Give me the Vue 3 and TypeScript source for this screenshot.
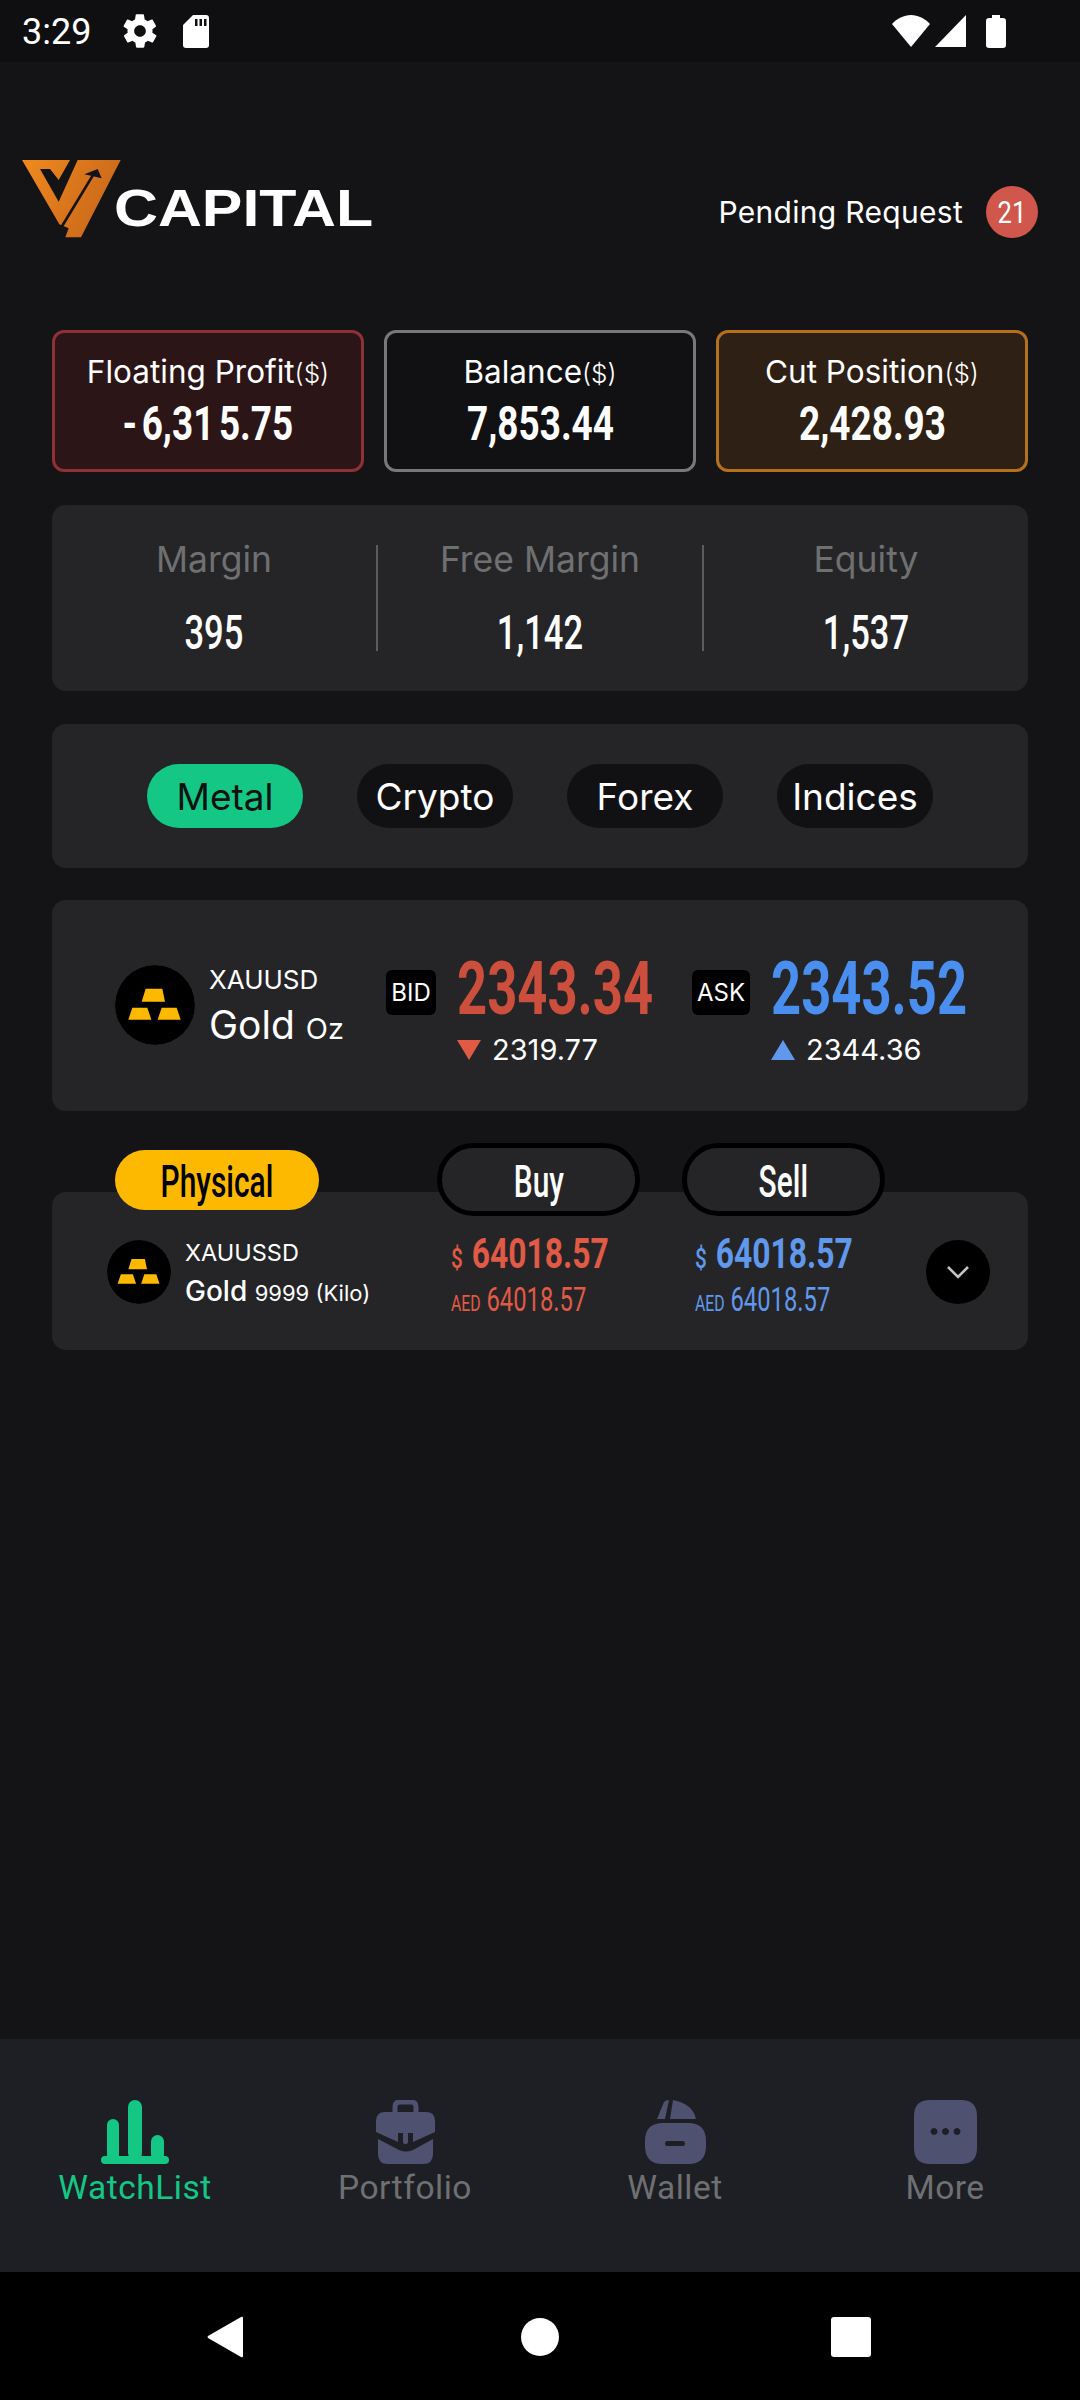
<script setup lang="ts">
const cards = [
  { label: 'Floating Profit', value: '- 6,31 5.75', tone: 'red' },
  { label: 'Balance', value: '7,853.44', tone: 'gray' },
  { label: 'Cut Position', value: '2,428.93', tone: 'orange' },
]
const stats = [
  { label: 'Margin', value: '395' },
  { label: 'Free Margin', value: '1,142' },
  { label: 'Equity', value: '1,537' },
]
const tabs = ['Metal', 'Crypto', 'Forex', 'Indices']
</script>

<template>
  <div class="page">
    <div class="status">
      <span class="time">3:29</span>
      <svg class="gear" viewBox="0 0 24 24"><path fill="#fff" d="M19.4 13c.1-.3.1-.7.1-1s0-.7-.1-1l2.1-1.6c.2-.2.2-.4.1-.6l-2-3.5c-.1-.2-.4-.3-.6-.2l-2.5 1c-.5-.4-1.100-.7-1.700-1l-.4-2.600c0-.3-.2-.5-.5-.5h-4c-.3 0-.5.2-.5.500l-.4 2.600c-.6.3-1.200.6-1.700 1l-2.500-1c-.2-.1-.5 0-.6.200l-2 3.500c-.1.200-.1.400.1.600L4.600 11c-.1.300-.1.700-.1 1s0 .7.1 1l-2.100 1.600c-.2.200-.2.400-.1.600l2 3.500c.1.200.4.300.6.200l2.500-1c.5.400 1.100.7 1.700 1l.4 2.600c0 .3.2.5.5.5h4c.3 0 .5-.2.5-.5l.4-2.600c.6-.3 1.200-.6 1.700-1l2.500 1c.2.100.5 0 .6-.2l2-3.500c.1-.2.1-.4-.1-.6L19.400 13zM12 15.500c-1.900 0-3.500-1.600-3.500-3.500s1.600-3.500 3.500-3.500 3.500 1.600 3.500 3.500-1.600 3.500-3.500 3.500z"/></svg>
      <svg class="sd" viewBox="0 0 26 33"><path fill="#fff" fill-rule="evenodd" d="M10 0h13a3 3 0 0 1 3 3v27a3 3 0 0 1-3 3H3a3 3 0 0 1-3-3V10zM12 4v7h2.500V4zM16.500 4v7H19V4zM21 4v7h2.500V4z"/></svg>
      <span class="grow"></span>
      <svg class="wifi" viewBox="0 0 38 32"><path fill="#fff" d="M19 32 0 9C5 3.500 12 0 19 0s14 3.500 19 9z"/></svg>
      <svg class="signal" viewBox="0 0 31 32"><path fill="#fff" d="M31 0v32H0z"/></svg>
      <svg class="battery" viewBox="0 0 20 33"><path fill="#fff" d="M6 0h8v3h3a3 3 0 0 1 3 3v24a3 3 0 0 1-3 3H3a3 3 0 0 1-3-3V6a3 3 0 0 1 3-3h3z"/></svg>
    </div>

    <header class="header">
      <div class="logo">
        <svg class="logo-mark" viewBox="38 65 296 235">
          <defs>
            <linearGradient id="lg" x1="0" y1="0" x2="1" y2="0.4">
              <stop offset="0" stop-color="#f08a1e" />
              <stop offset="1" stop-color="#c9681a" />
            </linearGradient>
          </defs>
          <polygon fill="url(#lg)" points="38,65 334,65 215,297 168,297 178,270 150,258" />
          <polygon fill="#141416" points="92,92 122,92 148,125 182,65 205,65 148,190" />
          <path fill="none" stroke="#141416" stroke-width="8" d="M158 264 250 112" />
          <polygon fill="#141416" points="225,108 265,92 277,120" />
        </svg>
        <span class="logo-text">CAPITAL</span>
      </div>
      <div class="pending">
        <span>Pending Request</span>
        <span class="badge"><span class="cond">21</span></span>
      </div>
    </header>

    <main class="main">
      <section class="cards">
        <div v-for="c in cards" :key="c.label" class="card" :class="c.tone">
          <div class="card-label">{{ c.label }}<small>($)</small></div>
          <div class="card-value">{{ c.value }}</div>
        </div>
      </section>

      <section class="panel stats">
        <div v-for="s in stats" :key="s.label" class="stat">
          <div class="stat-label">{{ s.label }}</div>
          <div class="stat-value">{{ s.value }}</div>
        </div>
      </section>

      <section class="panel tabs">
        <span v-for="(t, i) in tabs" :key="t" class="tab" :class="{ active: i === 0 }">{{ t }}</span>
      </section>

      <section class="panel gold">
        <svg class="coin" viewBox="43 47 240 240">
          <circle cx="163" cy="167" r="120" fill="#000" />
          <polygon fill="#fdb900" points="135,118 185,118 193,157 123,157" />
          <polygon fill="#fdb900" points="95,175 140,175 152,211 83,211" />
          <polygon fill="#fdb900" points="183,175 228,175 240,211 171,211" />
        </svg>
        <div class="gold-name">
          <div class="sym">XAUUSD</div>
          <div class="gname">Gold <small>Oz</small></div>
        </div>
        <span class="tag bid">BID</span>
        <div class="quote q-bid">
          <div class="price red-text">2343.34</div>
          <div class="sub"><i class="tri down"></i>2319.77</div>
        </div>
        <span class="tag ask">ASK</span>
        <div class="quote">
          <div class="price blue-text">2343.52</div>
          <div class="sub"><i class="tri up"></i>2344.36</div>
        </div>
      </section>

      <section class="pills">
        <span class="pill physical"><span>Physical</span></span>
        <span class="pill action first"><span>Buy</span></span>
        <span class="pill action"><span>Sell</span></span>
      </section>
      <section class="panel phys">
        <svg class="coin small" viewBox="43 47 240 240">
          <circle cx="163" cy="167" r="120" fill="#000" />
          <polygon fill="#fdb900" points="135,118 185,118 193,157 123,157" />
          <polygon fill="#fdb900" points="95,175 140,175 152,211 83,211" />
          <polygon fill="#fdb900" points="183,175 228,175 240,211 171,211" />
        </svg>
        <div class="phys-name">
          <div class="psym">XAUUSSD</div>
          <div class="pname">Gold <small>9999 (Kilo)</small></div>
        </div>
        <div class="pcol first red-soft">
          <div class="pusd"><small>$</small>64018.57</div>
          <div class="paed"><small>AED</small>64018.57</div>
        </div>
        <div class="pcol blue-soft">
          <div class="pusd"><small>$</small>64018.57</div>
          <div class="paed"><small>AED</small>64018.57</div>
        </div>
        <span class="chev">
          <svg viewBox="0 0 24 14"><path d="M2 2l10 10L22 2" fill="none" stroke="#c4c4c4" stroke-width="2.600" /></svg>
        </span>
      </section>
    </main>

    <nav class="nav">
      <div class="nav-item active">
        <svg class="ico" width="68" height="64" viewBox="0 0 68 64" fill="#14c784">
          <rect x="6" y="19" width="12" height="42" rx="6" />
          <rect x="27" y="0" width="14" height="60" rx="7" />
          <rect x="50" y="35" width="13" height="26" rx="6.500" />
          <rect x="0" y="56" width="68" height="8" rx="4" />
        </svg>
        <span>WatchList</span>
      </div>
      <div class="nav-item">
        <svg class="ico" width="59" height="64" viewBox="0 0 59 64" fill="#4f5170">
          <path d="M19 14V7q0-5 5-5h11q5 0 5 5v7" fill="none" stroke="#4f5170" stroke-width="5" />
          <path d="M9 12h41q9 0 9 9v11L37 42v-9H22v9L0 32V21q0-9 9-9z" />
          <path d="M2 39l21 11q7 3 14 0l20-11v15q0 10-10 10H12Q2 64 2 54z" />
          <rect x="27" y="32" width="5" height="12" rx="2" />
        </svg>
        <span>Portfolio</span>
      </div>
      <div class="nav-item">
        <svg class="ico" width="61" height="64" viewBox="0 0 61 64" fill="#4f5170">
          <path d="M12 19l7-17q2-2 5-2l-4 19zM28 0q20 4 23 19H25z" />
          <path fill-rule="evenodd" d="M18 23h25q18 0 18 18v5q0 18-18 18H18Q0 64 0 46v-5q0-18 18-18zM22 41q-2 0-2 2.500t2 2.500h16q2 0 2-2.500T38 41z" />
        </svg>
        <span>Wallet</span>
      </div>
      <div class="nav-item">
        <svg class="ico" width="63" height="64" viewBox="0 0 63 64" fill="#4f5170">
          <path fill-rule="evenodd" d="M16 0h31q16 0 16 16v32q0 16-16 16H16Q0 64 0 48V16Q0 0 16 0zM20 28a3.500 3.500 0 1 0 .01 0zM31.500 28a3.500 3.500 0 1 0 .01 0zM43 28a3.500 3.500 0 1 0 .01 0z" />
        </svg>
        <span>More</span>
      </div>
    </nav>

    <div class="sysnav">
      <svg class="sys-back" viewBox="0 0 36 42"><path fill="#fff" d="M36 2v38q0 2-2 1L1 22q-1-1 0-2L34 1q2-1 2 1z"/></svg>
      <span class="sys-home"></span>
      <span class="sys-square"></span>
    </div>
  </div>
</template>

<style>
html, body { margin: 0; background: #141416; }
</style>

<style scoped>
.page {
  width: 1080px;
  height: 2400px;
  display: flex;
  flex-direction: column;
  background: #141416;
  color: #fff;
  font-family: Inter, "Noto Sans", sans-serif;
  overflow: hidden;
}
small { font-size: inherit; }

.status {
  height: 62px;
  flex: none;
  display: flex;
  align-items: center;
  background: #0f0f11;
  padding-left: 22px;
}
.time { font: 400 36px Roboto, sans-serif; width: 100px; margin-top: 2px; }
.gear { width: 40px; height: 40px; margin-left: -2px; }
.sd { width: 26px; height: 33px; margin-left: 23px; }
.grow { flex: 1; }
.wifi { width: 38px; height: 32px; }
.signal { width: 31px; height: 32px; margin-left: 5px; }
.battery { width: 20px; height: 33px; margin: 0 74px 0 20px; }

.header {
  flex: none;
  display: flex;
  justify-content: space-between;
  align-items: flex-end;
  padding: 98px 42px 0 22px;
  margin-bottom: 90px;
}
.logo { display: flex; align-items: flex-start; height: 80px; width: 360px; }
.logo-mark { width: 98.700px; height: 78.300px; flex: none; }
.logo-text {
  font: 700 52px/1 "Liberation Sans", sans-serif;
  transform: scaleX(1.17);
  transform-origin: left;
  margin: 22px 0 0 -7px;
}
.pending { display: flex; align-items: center; gap: 23px; font-size: 30px; letter-spacing: .3px; margin-bottom: 2px; }
.badge {
  width: 52px;
  height: 52px;
  border-radius: 50%;
  background: #d1574c;
  display: flex;
  align-items: center;
  justify-content: center;
  font: 400 32px Roboto, sans-serif;
  letter-spacing: 0;
}
.cond { display: inline-block; transform: scaleX(.8); }

.main { display: flex; flex-direction: column; padding: 0 52px; flex: 1; }

.cards { display: flex; gap: 20px; margin-bottom: 33px; }
.card {
  width: 312px;
  height: 142px;
  box-sizing: border-box;
  border: 3px solid;
  border-radius: 12px;
  display: flex;
  flex-direction: column;
  align-items: center;
  padding-top: 21px;
}
.red { background: #2c1517; border-color: #8f2f36; }
.gray { background: #111113; border-color: #77787a; }
.orange { background: #2e2014; border-color: #b5701c; }
.card-label { font-size: 31.500px; line-height: 36px; white-space: nowrap; }
.card-label small { font-size: 26px; font-weight: 300; }
.card-value {
  font: 700 48px/52px Roboto, sans-serif;
  transform: scaleX(.77);
  white-space: pre;
  word-spacing: -6px;
  margin-top: 6px;
}

.panel { background: #252527; border-radius: 14px; }

.stats { height: 186px; display: flex; padding: 40px 0; box-sizing: border-box; margin-bottom: 33px; }
.stat {
  flex: 1;
  display: flex;
  flex-direction: column;
  align-items: center;
  border-left: 2px solid #5c5c5e;
  height: 106px;
}
.stat:first-child { border-left: 0; }
.stat-label { font-size: 35.500px; line-height: 40px; color: #6f7072; margin-top: -5px; }
.stat-value { font: 500 48px/52px Roboto, sans-serif; transform: scaleX(.72); margin-top: 27px; }

.tabs {
  height: 144px;
  display: flex;
  align-items: center;
  justify-content: center;
  gap: 54px;
  margin-bottom: 32px;
}
.tab {
  width: 156px;
  height: 64px;
  border-radius: 32px;
  background: #111113;
  display: flex;
  align-items: center;
  justify-content: center;
  font-size: 37px;
}
.tab.active { background: #14c784; color: #111; }

.gold { height: 211px; display: flex; align-items: flex-start; padding: 65px 0 0 63px; box-sizing: border-box; margin-bottom: 32px; }
.coin { width: 80px; height: 80px; flex: none; border-radius: 50%; }
.gold-name { width: 177px; margin-left: 14px; flex: none; white-space: nowrap; }
.sym { font-size: 26px; line-height: 32px; margin-top: -1px; }
.gname { font-size: 39px; line-height: 44px; margin-top: 7px; }
.gname small { font-size: 29px; }
.tag {
  height: 45px;
  background: #000;
  border-radius: 6px;
  display: flex;
  align-items: center;
  justify-content: center;
  font-size: 24px;
  flex: none;
  margin-top: 5px;
}
.bid { width: 50px; }
.ask { width: 58px; }
.quote { margin-left: 21px; }
.q-bid { width: 235px; flex: none; }
.price {
  font: 700 74px/70px Roboto, sans-serif;
  transform: scaleX(.71);
  transform-origin: left;
  margin-top: -11px;
}
.red-text { color: #cc4e3c; }
.blue-text { color: #4a8ff0; }
.sub { display: flex; align-items: center; font-size: 29px; line-height: 36px; margin-top: 8px; }
.tri { width: 0; height: 0; border-left: 12px solid transparent; border-right: 12px solid transparent; margin-right: 11px; }
.down { border-top: 20px solid #e05a45; }
.up { border-bottom: 20px solid #6098ec; }

.pills { display: flex; align-items: center; height: 73px; margin-left: 63px; margin-bottom: -24px; position: relative; z-index: 1; }
.pill {
  font: 500 44px Roboto, sans-serif;
  display: flex;
  align-items: center;
  justify-content: center;
  box-sizing: border-box;
}
.pill span { display: inline-block; transform: scaleX(.68); margin-top: 5px; }
.physical { width: 204px; height: 60px; border-radius: 30px; background: #fdb900; color: #000; }
.action { width: 203px; height: 73px; border-radius: 37px; background: #252527; border: 5px solid #000; margin-left: 42px; }
.action.first { margin-left: 118px; }

.phys { height: 158px; display: flex; align-items: flex-start; padding: 48px 0 0 55px; box-sizing: border-box; }
.coin.small { width: 64px; height: 64px; }
.phys-name { width: 266px; margin-left: 14px; flex: none; margin-top: -2px; }
.psym { font-size: 23.500px; line-height: 30px; }
.pname { font-size: 28px; line-height: 34px; margin-top: 6px; font-weight: 500; white-space: nowrap; }
.pname small { font-size: 22px; font-weight: 400; }
.pcol { width: 231px; flex: none; margin-top: -9px; }
.pcol.first { width: 244px; }
.red-soft { color: #e05a45; }
.blue-soft { color: #6098ec; }
.pusd {
  font: 700 43px/44px Roboto, sans-serif;
  transform: scaleX(.74);
  transform-origin: left;
  white-space: nowrap;
}
.pusd small { font-size: 28px; font-weight: 500; margin-right: 12px; }
.paed {
  font: 400 33px/36px Roboto, sans-serif;
  transform: scaleX(.72);
  transform-origin: left;
  white-space: nowrap;
  margin-top: 1px;
}
.paed small { font-size: 22px; margin-right: 8px; }
.chev {
  width: 64px;
  height: 64px;
  border-radius: 50%;
  background: #000;
  display: flex;
  align-items: center;
  justify-content: center;
}
.chev svg { width: 24px; height: 14px; }

.nav {
  height: 233px;
  flex: none;
  background: #1e1f24;
  display: flex;
  box-sizing: border-box;
  padding-top: 61px;
}
.nav-item {
  flex: 1;
  display: flex;
  flex-direction: column;
  align-items: center;
  font: 400 33.500px/38px Roboto, sans-serif;
  color: #6f7072;
  letter-spacing: .5px;
}
.nav-item.active { color: #14c784; }
.ico { margin-bottom: 5px; }

.sysnav {
  height: 128px;
  flex: none;
  background: #000;
  display: flex;
  align-items: center;
  justify-content: center;
  padding: 2px 2px 0 0;
  box-sizing: border-box;
}
.sys-back { width: 36px; height: 42px; margin-right: 278px; }
.sys-home { width: 38px; height: 38px; border-radius: 50%; background: #fff; }
.sys-square { width: 40px; height: 40px; border-radius: 3px; background: #fff; margin-left: 272px; }
</style>
